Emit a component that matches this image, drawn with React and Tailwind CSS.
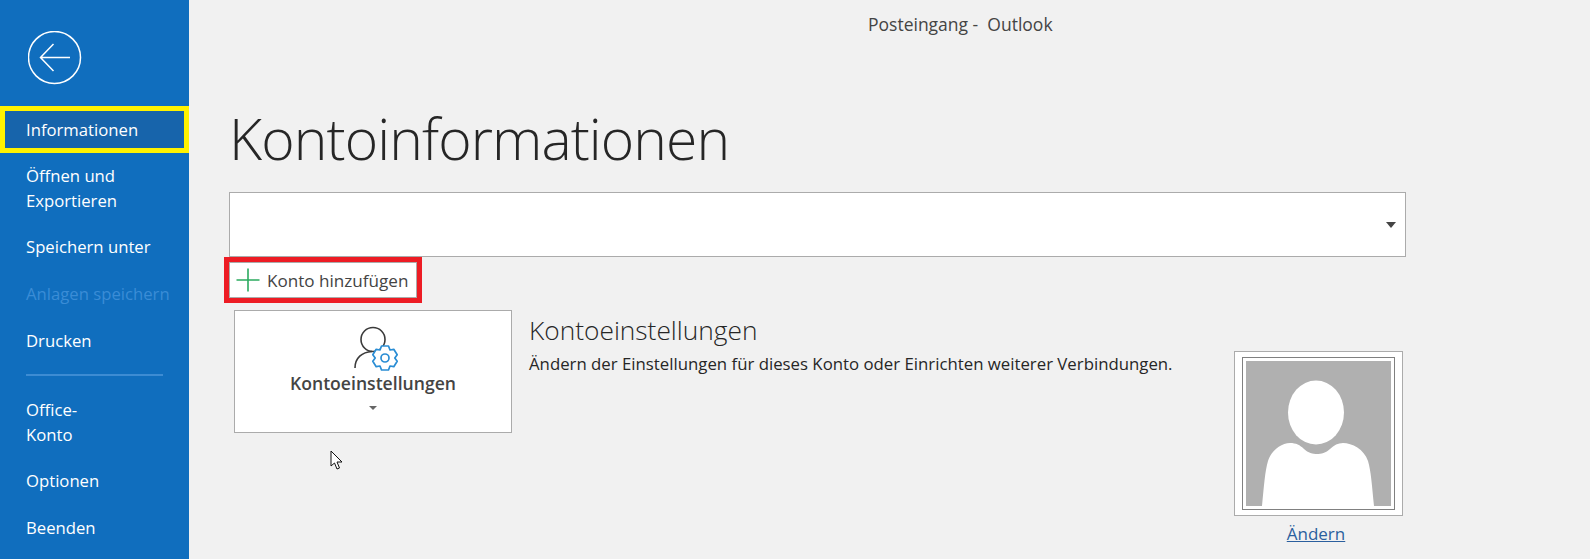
import React from "react";

function NavItem({ children, disabled, cls = "" }) {
  return (
    <div className={`pl-[26px] flex flex-col justify-center text-[16.7px] leading-[24.5px] ${disabled ? "text-[#3a8cd6]" : "text-white"} ${cls}`}>
      {children}
    </div>
  );
}

function Gear() {
  return (
    <g stroke="#2a8dd4" strokeWidth="1.7" fill="#fff" strokeLinejoin="round">
      <path d="M381.5 346 L388.5 346 L390 350 L393.8 349.3 L397.2 354.7 L394.8 358 L397.2 361.3 L393.8 366.7 L390 366 L388.5 370 L381.5 370 L380 366 L376.2 366.7 L372.8 361.3 L375.2 358 L372.8 354.7 L376.2 349.3 L380 350 Z" />
      <circle cx="385" cy="358" r="4" fill="#fff" />
    </g>
  );
}

export default function App() {
  return (
    <div className="flex w-[1590px] h-[559px] overflow-hidden bg-[#f1f1f1] font-['Open_Sans','Noto_Sans',sans-serif]">
      <aside className="w-[189px] shrink-0 bg-[#106ebe] flex flex-col">
        <div className="h-[106px] pl-[28px] pt-[31px]">
          <svg width="54" height="54" viewBox="0 0 54 54" fill="none" stroke="#fff" strokeWidth="1.5">
            <circle cx="26.5" cy="26.5" r="26" />
            <path d="M12.5 26.5 H42 M25.5 13 L12.5 26.5 L25.5 40" />
          </svg>
        </div>
        <NavItem cls="h-[47px] border-[5px] border-[#fff200] bg-[#1764ab] !pl-[21px] pt-[1px]">Informationen</NavItem>
        <NavItem cls="h-[71px]">
          <span>Öffnen und</span>
          <span>Exportieren</span>
        </NavItem>
        <NavItem cls="h-[47px]">Speichern unter</NavItem>
        <NavItem cls="h-[46px]" disabled>Anlagen speichern</NavItem>
        <NavItem cls="h-[48px]">Drucken</NavItem>
        <div className="ml-[26px] w-[137px] h-[2px] bg-[#3d8cd3] mt-[9px] mb-[11px]" />
        <NavItem cls="h-[71px]">
          <span>Office-</span>
          <span>Konto</span>
        </NavItem>
        <NavItem cls="h-[46px]">Optionen</NavItem>
        <NavItem cls="h-[48px] pt-[1px]">Beenden</NavItem>
      </aside>

      <main className="flex-1 relative">
        <div className="h-[48px] flex items-center pl-[679px] text-[17.5px] text-[#444444] whitespace-pre">Posteingang -  Outlook</div>

        <div className="pl-[40px]">
          <h1 className="h-[144px] pt-[54px] text-[57px] leading-[72px] tracking-[-0.9px] font-light text-[#262626]">Kontoinformationen</h1>

          <div className="w-[1177px] h-[65px] bg-white border border-[#ababab] flex items-center justify-end pr-[9px]">
            <div className="w-0 h-0 border-l-[5.5px] border-r-[5.5px] border-t-[6px] border-l-transparent border-r-transparent border-t-[#444444]" />
          </div>

          <div className="-ml-[5px] w-[198px] h-[46px] border-[5px] border-[#ed1c24]">
            <div className="h-full bg-white border border-[#ababab] flex items-center text-[17.1px] text-[#444444]">
              <svg width="24" height="24" viewBox="0 0 24 24" className="ml-[6px] mr-[7px] shrink-0" stroke="#2bab5f" strokeWidth="1.6" fill="none">
                <path d="M12 0.5 V23.5 M0.5 12 H23.5" />
              </svg>
              <span className="whitespace-nowrap pt-[1px]">Konto hinzufügen</span>
            </div>
          </div>

          <div className="flex mt-[7px]">
            <div className="ml-[5px] w-[278px] h-[123px] shrink-0 bg-white border border-[#ababab] flex flex-col items-center">
              <svg width="60" height="50" viewBox="343 325 60 50" className="mt-[14px] shrink-0" fill="none">
                <circle cx="373" cy="339.5" r="12" stroke="#3b3b3b" strokeWidth="1.6" />
                <path d="M355 368 C355 358 362 352 372 351.5" stroke="#3b3b3b" strokeWidth="1.6" />
                <Gear />
              </svg>
              <div className="text-[17.6px] leading-[22px] font-semibold text-[#444444] -mt-[3px] whitespace-nowrap">Kontoeinstellungen</div>
              <div className="mt-[12px] w-0 h-0 border-l-[4px] border-r-[4px] border-t-[4px] border-l-transparent border-r-transparent border-t-[#666666]" />
            </div>

            <div className="ml-[17px] w-[705px] shrink-0">
              <div className="text-[26.3px] leading-[32px] font-light text-[#262626] mt-[4px] whitespace-nowrap">Kontoeinstellungen</div>
              <div className="text-[16.8px] leading-[24px] text-[#262626] mt-[6px] whitespace-nowrap">Ändern der Einstellungen für dieses Konto oder Einrichten weiterer Verbindungen.</div>
            </div>

            <div className="mt-[41px] w-[169px] shrink-0 flex flex-col items-center">
              <div className="w-[169px] h-[165px] bg-white border border-[#ababab] flex items-center justify-center">
                <div className="w-[153px] h-[153px] border-[1.5px] border-[#808080] p-[2.5px]">
                  <svg width="145" height="145" viewBox="0 0 145 145" className="block">
                    <rect width="145" height="145" fill="#b0b0b0" />
                    <ellipse cx="70" cy="51.5" rx="28" ry="32" fill="#fff" />
                    <path d="M16 145 C18 125 19 110 22 100 C25 90 35 82 44 82 C50 82 54 84 58 88 C62 92 67 93 71 93 C75 93 80 92 84 88 C88 84 92 82 97 82 C106 82 118 88 122 100 C125 110 126 125 128 145 Z" fill="#fff" />
                  </svg>
                </div>
              </div>
              <a className="mt-[6px] -ml-[5px] text-[17px] leading-[24px] text-[#2b5f9e] underline">Ändern</a>
            </div>
          </div>
        </div>

        <svg width="14" height="21" viewBox="0 0 14 21" className="absolute left-[141px] top-[450px]">
          <path d="M1 1 V16 L4.5 13 L7 19 L9.5 18 L7 12 L12 12 Z" fill="#fff" stroke="#111" strokeWidth="1" strokeLinejoin="miter" />
        </svg>
      </main>
    </div>
  );
}
